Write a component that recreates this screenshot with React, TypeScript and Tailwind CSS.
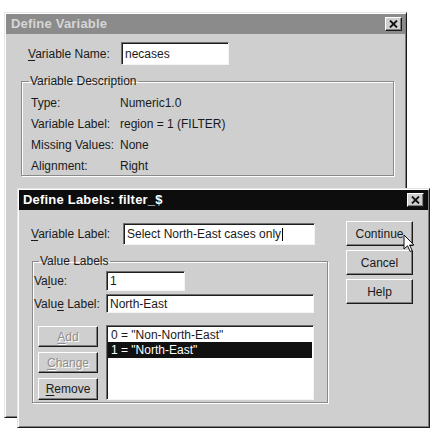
import type { ReactNode } from 'react'

const font = { fontFamily: '"Liberation Sans", Arial, sans-serif' }

// Win95-style raised frame for windows
const windowFrame =
  'border-t border-l border-r border-b border-t-[#e4e4e4] border-l-[#e4e4e4] border-r-[#1a1a1a] border-b-[#1a1a1a] shadow-[inset_1px_1px_0_#ffffff,inset_-1px_-1px_0_#7e7e7e]'

const sunken =
  'border-t border-l border-r border-b border-t-[#6e6e6e] border-l-[#6e6e6e] border-r-[#f4f4f4] border-b-[#f4f4f4] shadow-[inset_1px_1px_0_#1e1e1e] bg-white'

function Mn({ children }: { children: ReactNode }) {
  return <span className="underline underline-offset-2">{children}</span>
}

function CloseBox() {
  return (
    <div className="w-[17px] h-[14px] bg-[#cfcfcf] border-t border-l border-r border-b border-t-white border-l-white border-r-[#1a1a1a] border-b-[#1a1a1a] shadow-[inset_-1px_-1px_0_#7e7e7e] flex items-center justify-center">
      <svg width="9" height="8" viewBox="0 0 9 8">
        <path d="M1 0.5 L8 7.5 M8 0.5 L1 7.5" stroke="#111" strokeWidth="1.8" />
      </svg>
    </div>
  )
}

function Button({ children, disabled, className = '' }: { children: ReactNode; disabled?: boolean; className?: string }) {
  return (
    <div
      className={`bg-[#cfcfcf] border-t border-l border-r border-b border-t-white border-l-white border-r-[#1a1a1a] border-b-[#1a1a1a] shadow-[inset_-1px_-1px_0_#7e7e7e] flex items-center justify-center text-[12px] ${
        disabled ? 'text-[#8e8e8e] [text-shadow:1px_1px_0_#ffffff]' : 'text-[#1a1a1a]'
      } ${className}`}
    >
      {children}
    </div>
  )
}

function Field({ value, className = '', caret }: { value: string; className?: string; caret?: boolean }) {
  return (
    <div className={`${sunken} flex items-center pl-[3px] text-[12px] text-[#1a1a1a] ${className}`}>
      <span>{value}</span>
      {caret && <span className="w-px h-[13px] bg-black ml-px" />}
    </div>
  )
}

const descRows: [string, string][] = [
  ['Type:', 'Numeric1.0'],
  ['Variable Label:', 'region = 1 (FILTER)'],
  ['Missing Values:', 'None'],
  ['Alignment:', 'Right'],
]

function DefineVariable() {
  return (
    <div className={`absolute left-[4px] top-[12px] w-[403px] h-[406px] bg-[#cfcfcf] ${windowFrame} p-px`}>
      <div className="h-[20px] bg-[#8b8b8b] flex items-center justify-between pl-[5px] pr-[3px]">
        <span className="text-[13px] font-bold text-[#d6d6d6] tracking-[0.2px]">Define Variable</span>
        <CloseBox />
      </div>
      <div className="flex items-center mt-[8px] pl-[22px] text-[12px] text-[#1a1a1a]">
        <span className="w-[93px]">
          <Mn>V</Mn>ariable Name:
        </span>
        <Field value="necases" className="w-[108px] h-[23px]" />
      </div>
      <fieldset className="ml-[15px] mt-[7px] w-[373px] h-[104px] border border-[#8a8a8a] shadow-[inset_1px_1px_0_#ffffff,1px_1px_0_#ffffff] px-[9px] text-[12px] text-[#1a1a1a]">
        <legend className="ml-[-2px] px-[1px]">Variable Description</legend>
        <div className="flex flex-col mt-[2px]">
          {descRows.map(([k, v]) => (
            <div key={k} className="flex h-[21px] items-center">
              <span className="w-[89px]">{k}</span>
              <span>{v}</span>
            </div>
          ))}
        </div>
      </fieldset>
    </div>
  )
}

function DefineLabels() {
  return (
    <div className={`absolute left-[17px] top-[188px] w-[413px] h-[240px] bg-[#cfcfcf] ${windowFrame} p-px`}>
      <div className="h-[20px] bg-[#0d0d0d] flex items-center justify-between pl-[4px] pr-[4px]">
        <span className="text-[13px] font-bold text-white tracking-[0.2px]">Define Labels: filter_$</span>
        <CloseBox />
      </div>
      <div className="flex pl-[12px] pt-[13px] text-[12px] text-[#1a1a1a]">
        <div className="w-[298px]">
          <div className="flex items-center">
            <span className="w-[92px]">
              <Mn>V</Mn>ariable Label:
            </span>
            <Field value="Select North-East cases only" caret className="w-[192px] h-[22px]" />
          </div>
          <fieldset className="ml-px mt-[7px] w-[296px] h-[151px] border border-[#8a8a8a] shadow-[inset_1px_1px_0_#ffffff,1px_1px_0_#ffffff] pl-[1px]">
            <legend className="ml-[5px] px-[1px]">Value Labels</legend>
            <div className="flex items-center mt-[1px]">
              <span className="w-[72px]">
                Va<Mn>l</Mn>ue:
              </span>
              <Field value="1" className="w-[79px] h-[20px]" />
            </div>
            <div className="flex items-center mt-[3px]">
              <span className="w-[72px]">
                Valu<Mn>e</Mn> Label:
              </span>
              <Field value="North-East" className="w-[208px] h-[19px]" />
            </div>
            <div className="flex mt-[12px]">
              <div className="flex flex-col gap-[5px] ml-[4px] mt-[1px]">
                <Button disabled className="w-[60px] h-[21px]">
                  <Mn>A</Mn>dd
                </Button>
                <Button disabled className="w-[60px] h-[21px]">
                  <Mn>C</Mn>hange
                </Button>
                <Button className="w-[60px] h-[22px]">
                  <Mn>R</Mn>emove
                </Button>
              </div>
              <div className={`${sunken} ml-[8px] w-[208px] h-[75px] flex flex-col pt-px px-px`}>
                <div className="h-[15px] flex items-center pl-[3px]">0 = "Non-North-East"</div>
                <div className="h-[16px] flex items-center pl-[3px] bg-[#111111] text-white">1 = "North-East"</div>
              </div>
            </div>
          </fieldset>
        </div>
        <div className="ml-[17px] flex flex-col gap-[4px] mt-[-2px]">
          <Button className="w-[67px] h-[25px] relative">
            Continue
            <svg className="absolute left-[56px] top-[12px]" width="13" height="19" viewBox="0 0 13 19">
              <path d="M1 1 L1 15 L4.5 11.8 L7.2 17.5 L9.2 16.6 L6.6 11 L11 11 Z" fill="#fff" stroke="#111" strokeWidth="1" strokeLinejoin="miter" />
            </svg>
          </Button>
          <Button className="w-[67px] h-[25px]">Cancel</Button>
          <Button className="w-[67px] h-[25px]">Help</Button>
        </div>
      </div>
    </div>
  )
}

export default function App() {
  return (
    <div className="relative w-[435px] h-[433px] bg-white overflow-hidden" style={font}>
      <DefineVariable />
      <DefineLabels />
    </div>
  )
}
